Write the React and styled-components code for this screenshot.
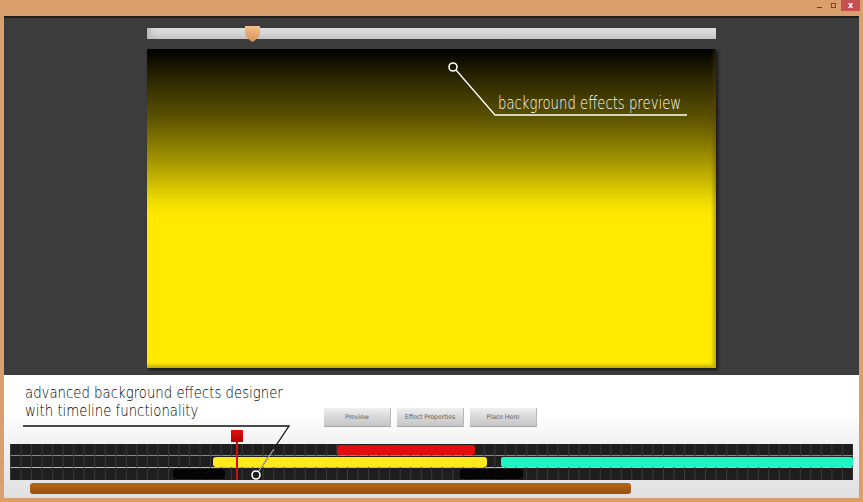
import React from "react";
import styled, { createGlobalStyle } from "styled-components";

const Global = createGlobalStyle`
  html, body { margin: 0; padding: 0; background: #d9a06e; }
  body { width: 863px; height: 502px; overflow: hidden; font-family: "DejaVu Sans", sans-serif; }
`;

const Window = styled.div`
  width: 863px;
  height: 502px;
  background: #d9a06e;
  display: flex;
  flex-direction: column;
  box-sizing: border-box;
`;

const TitleBar = styled.div`
  height: 16px;
  display: flex;
  justify-content: flex-end;
  align-items: flex-start;
  padding-right: 3px;
`;

const Ctl = styled.div`
  width: ${(p) => p.$w || 14}px;
  height: 11px;
  display: flex;
  align-items: center;
  justify-content: center;
  background: ${(p) => (p.$close ? "#c75050" : "transparent")};
  color: ${(p) => (p.$close ? "#fff" : "#333")};
  font: bold 8px "DejaVu Sans", sans-serif;
  margin-left: ${(p) => p.$ml || 0}px;
`;

const Content = styled.div`
  flex: 1;
  margin: 0 4px 4px 4px;
  display: flex;
  flex-direction: column;
  position: relative;
`;

const Stage = styled.div`
  height: 359px;
  background: #3c3c3c;
  border-top: 2px solid #1e1e1e;
  box-sizing: border-box;
  padding: 10px 0 0 143px;
  display: flex;
  flex-direction: column;
  gap: 10px;
  position: relative;
`;

const Slider = styled.div`
  width: 569px;
  height: 11px;
  background: linear-gradient(to bottom, #e2e2e2 0%, #d2d2d2 60%, #c4c4c4 100%);
  position: relative;
  box-shadow: inset 8px 0 8px -6px #aaa;
`;

const Thumb = styled.svg`
  position: absolute;
  left: 97px;
  top: -2px;
`;

const Preview = styled.div`
  width: 569px;
  height: 319px;
  background: linear-gradient(to bottom, #000 0%, #2a2500 9%, #5e5400 22%, #a99a00 36%, #ecd800 47%, #ffe900 52%, #ffea00 100%);
  box-shadow: inset -3px -3px 3px rgba(90, 70, 0, 0.35), 2px 2px 3px rgba(0, 0, 0, 0.6);
  position: relative;
`;

const Callout = styled.svg`
  position: absolute;
  left: 0;
  top: 0;
  pointer-events: none;
`;

const Label = styled.div`
  position: absolute;
  left: ${(p) => p.$x}px;
  top: ${(p) => p.$y}px;
  color: ${(p) => p.$c};
  font-family: "DejaVu Sans", sans-serif;
  font-stretch: condensed;
  font-weight: ${(p) => p.$wt || 200};
  font-size: ${(p) => p.$s || 16}px;
  line-height: ${(p) => p.$s || 16}px;
  white-space: nowrap;
  transform: scaleX(${(p) => p.$sx || 0.76});
  transform-origin: left top;
`;

const Bottom = styled.div`
  flex: 1;
  background: linear-gradient(to bottom, #ffffff 0%, #ffffff 30%, #f0f0f0 60%, #e0e0e0 100%);
  position: relative;
  display: flex;
  flex-direction: column;
`;

const ButtonRow = styled.div`
  display: flex;
  gap: 6px;
  margin: 33px 0 0 320px;
`;

const Btn = styled.div`
  width: 67px;
  height: 19px;
  box-sizing: border-box;
  display: flex;
  align-items: center;
  justify-content: center;
  background: linear-gradient(to bottom, #f0f0f0 0%, #d6d6d6 55%, #c6c6c6 100%);
  border-bottom: 1px solid #a8a8a8;
  border-right: 1px solid #b8b8b8;
  font: 6.5px "DejaVu Sans", sans-serif;
  color: #666;
  letter-spacing: -0.2px;
`;

const Timeline = styled.div`
  margin: 17px 0 0 6px;
  width: 843px;
  height: 36px;
  position: relative;
  background-color: #1e1e1e;
  background-image:
    linear-gradient(to right, #3a3a3a 1px, transparent 1px),
    linear-gradient(to bottom, transparent 11px, #888 11px, #888 12px, transparent 12px, transparent 23px, #bbb 23px, #bbb 24px, transparent 24px);
  background-size: 10.54px 100%, 100% 100%;
`;

const Bar = styled.div`
  position: absolute;
  left: ${(p) => p.$l}px;
  width: ${(p) => p.$w}px;
  top: ${(p) => p.$t}px;
  height: ${(p) => p.$h || 10}px;
  background: ${(p) => p.$c};
  border-radius: ${(p) => p.$r || 3}px;
`;

const Marker = styled.div`
  position: absolute;
  left: 221px;
  top: -14px;
  width: 12px;
  height: 12px;
  background: linear-gradient(to bottom, #e01010, #b00000);
  &::after {
    content: "";
    position: absolute;
    left: 5px;
    top: 12px;
    width: 2px;
    height: 38px;
    background: #d01010;
  }
`;

const Scroll = styled.div`
  margin: 3px 0 0 26px;
  width: 601px;
  height: 11px;
  background: linear-gradient(to bottom, #b46818, #9c500a);
  border-radius: 3px;
`;

export default function App() {
  return (
    <>
      <Global />
      <Window>
        <TitleBar>
          <Ctl $w={12} style={{ alignItems: "flex-end" }}>
            <span style={{ width: 5, height: 1, background: "#444", marginBottom: 3 }} />
          </Ctl>
          <Ctl $w={12} $ml={2}>
            <span style={{ width: 5, height: 5, border: "1px solid #555", boxSizing: "border-box" }} />
          </Ctl>
          <Ctl $close $w={19} $ml={2}>x</Ctl>
        </TitleBar>
        <Content>
          <Stage>
            <Slider>
              <Thumb width="17" height="16" viewBox="0 0 17 16">
                <defs>
                  <linearGradient id="tg" x1="0" y1="0" x2="0" y2="1">
                    <stop offset="0" stopColor="#f4c08e" />
                    <stop offset="1" stopColor="#d8925a" />
                  </linearGradient>
                </defs>
                <path d="M1 0 H16 V7 Q16 11 8.5 16 Q1 11 1 7 Z" fill="url(#tg)" />
              </Thumb>
            </Slider>
            <Preview>
              <Callout width="569" height="319">
                <circle cx="306" cy="18" r="4" fill="none" stroke="#fff" strokeWidth="1.6" />
                <polyline points="309,21 348,66 540,66" fill="none" stroke="#fff" strokeWidth="1.3" />
              </Callout>
              <Label $x={351} $y={45} $c="#fff" $s={18} $sx={0.735}>background effects preview</Label>
            </Preview>
          </Stage>
          <Bottom>
            <Label $x={21} $y={10} $c="#000" $s={16} $wt={300} $sx={0.83}>advanced background effects designer</Label>
            <Label $x={21} $y={28} $c="#000" $s={16} $wt={300} $sx={0.83}>with timeline functionality</Label>
            <ButtonRow>
              <Btn>Preview</Btn>
              <Btn>Effect Properties</Btn>
              <Btn>Place Here</Btn>
            </ButtonRow>
            <Timeline>
              <Bar $l={327} $w={138} $t={1} $c="#e00e0e" />
              <Bar $l={203} $w={274} $t={13} $c="#ffe81c" />
              <Bar $l={491} $w={352} $t={13} $c="#1ef5c2" $r={2} />
              <Bar $l={163} $w={52} $t={25} $h={10} $c="#050505" />
              <Bar $l={450} $w={63} $t={25} $h={10} $c="#050505" />
              <Marker />
            </Timeline>
            <Scroll />
            <Callout width="855" height="123" style={{ zIndex: 2 }}>
              <polyline points="19,51 285,51 255,96" fill="none" stroke="#111" strokeWidth="1.3" />
              <line x1="270" y1="74" x2="254" y2="97" stroke="#ddd" strokeWidth="1" />
              <circle cx="252" cy="100" r="4" fill="none" stroke="#fff" strokeWidth="1.6" />
            </Callout>
          </Bottom>
        </Content>
      </Window>
    </>
  );
}
